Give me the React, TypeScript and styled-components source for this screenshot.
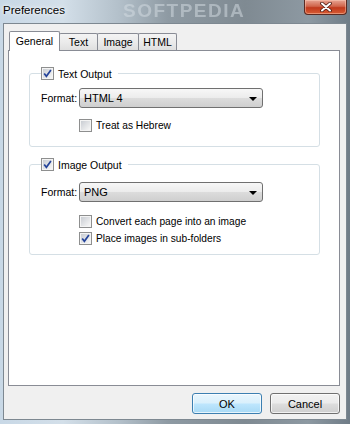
import styled, { createGlobalStyle } from "styled-components"

const GlobalStyle = createGlobalStyle`
  html, body {
    margin: 0;
    padding: 0;
    background: #ffffff;
  }
  body {
    font-family: "Liberation Sans", Arial, sans-serif;
  }
`

const CheckBox = ({ checked }: { checked?: boolean }) => (
  <svg width="13" height="13" viewBox="0 0 13 13">
    <defs>
      <linearGradient id="cbInner" x1="0" y1="0" x2="1" y2="1">
        <stop offset="0" stopColor="#c9cdd3" />
        <stop offset="1" stopColor="#f7f7f7" />
      </linearGradient>
    </defs>
    <rect x="0.5" y="0.5" width="12" height="12" fill="#f4f4f4" stroke="#8e8f8f" />
    <rect x="2" y="2" width="9" height="9" fill="url(#cbInner)" />
    {checked ? (
      <path d="M3.2 6.4 L5.4 9.3 L9.9 3" fill="none" stroke="#24439a" strokeWidth="1.7" />
    ) : null}
  </svg>
)

const CloseGlyph = () => (
  <svg width="12" height="10" viewBox="0 0 12 10">
    <path d="M2 1.5 L10 8.5 M10 1.5 L2 8.5" stroke="#4a1a12" strokeWidth="3.6" strokeLinecap="round" />
    <path d="M2 1.5 L10 8.5 M10 1.5 L2 8.5" stroke="#ffffff" strokeWidth="2" strokeLinecap="round" />
  </svg>
)

const CheckOption = ({ label, checked }: { label: string; checked?: boolean }) => (
  <CheckRow>
    <CheckBox checked={checked} />
    <span>{label}</span>
  </CheckRow>
)

const FormatRow = ({ value }: { value: string }) => (
  <Row>
    <FieldLabel>Format:</FieldLabel>
    <Combo>
      <span>{value}</span>
      <ComboArrow />
    </Combo>
  </Row>
)

export default function App() {
  return (
    <>
      <GlobalStyle />
      <Window>
        <TitleBar>
          <Title>Preferences</Title>
          <Watermark>SOFTPEDIA</Watermark>
          <CloseButton aria-label="Close">
            <CloseGlyph />
          </CloseButton>
        </TitleBar>
        <Client>
          <TabRow>
            <Tab $active $width={51}>General</Tab>
            <Tab $width={39}>Text</Tab>
            <Tab $width={42}>Image</Tab>
            <Tab $width={39}>HTML</Tab>
          </TabRow>
          <Panel>
            <Group $padTop={8} $padBottom={14}>
              <Legend>
                <CheckBox checked />
                <span>Text Output</span>
              </Legend>
              <FormatRow value="HTML 4" />
              <Options $top={11}>
                <CheckOption label="Treat as Hebrew" />
              </Options>
            </Group>
            <Group $padTop={11} $padBottom={9} $spaced>
              <Legend>
                <CheckBox checked />
                <span>Image Output</span>
              </Legend>
              <FormatRow value="PNG" />
              <Options $top={13}>
                <CheckOption label="Convert each page into an image" />
                <CheckOption label="Place images in sub-folders" checked />
              </Options>
            </Group>
          </Panel>
          <ButtonRow>
            <DialogButton $default>OK</DialogButton>
            <DialogButton>Cancel</DialogButton>
          </ButtonRow>
        </Client>
      </Window>
    </>
  )
}

const Window = styled.div`
  width: 350px;
  height: 424px;
  box-sizing: border-box;
  padding: 0 3px 4px 3px;
  display: flex;
  flex-direction: column;
  background: linear-gradient(
    90deg,
    #c8d8e6 0%,
    #d3dfe9 18%,
    #b3c0ca 34%,
    #8e9aa3 48%,
    #7f8a92 70%,
    #8d99a2 88%,
    #6f7c87 100%
  );
  overflow: hidden;
`

const TitleBar = styled.div`
  height: 23px;
  flex: none;
  display: flex;
  align-items: flex-start;
  justify-content: space-between;
  position: relative;
`

const Title = styled.span`
  margin-top: 4px;
  font-size: 11.5px;
  color: #000000;
  text-shadow: 0 0 6px rgba(255, 255, 255, 0.9), 0 0 3px rgba(255, 255, 255, 0.9);
  position: relative;
  z-index: 1;
`

const Watermark = styled.span`
  position: absolute;
  left: 120px;
  top: 1px;
  font-size: 19px;
  line-height: 19px;
  font-weight: bold;
  letter-spacing: 1.5px;
  color: rgba(214, 222, 228, 0.5);
  filter: blur(0.7px);
  pointer-events: none;
`

const CloseButton = styled.div`
  width: 43px;
  height: 15px;
  box-sizing: border-box;
  border: 1px solid #5a2a22;
  border-top: none;
  border-radius: 0 0 4px 4px;
  background: linear-gradient(180deg, #e7a493 0%, #d0654b 45%, #c0391c 55%, #d75c34 100%);
  box-shadow: inset 0 0 0 1px rgba(255, 210, 190, 0.45);
  display: flex;
  align-items: center;
  justify-content: center;
  position: relative;
  z-index: 1;
`

const Client = styled.div`
  flex: 1;
  display: flex;
  flex-direction: column;
  background: #f0f0f0;
  border: 1px solid #7d8891;
  padding: 7px 6px 5px 4px;
  font-size: 10.2px;
  color: #000000;
`

const TabRow = styled.div`
  height: 19px;
  display: flex;
  align-items: flex-end;
  padding-left: 1px;
`

const Tab = styled.div<{ $active?: boolean; $width: number }>`
  width: ${(p) => p.$width}px;
  height: ${(p) => (p.$active ? 20 : 17)}px;
  box-sizing: border-box;
  margin-left: -1px;
  margin-bottom: ${(p) => (p.$active ? -1 : 0)}px;
  border: 1px solid #898c95;
  border-bottom: none;
  border-radius: 2px 2px 0 0;
  background: ${(p) =>
    p.$active ? "#ffffff" : "linear-gradient(180deg, #f4f4f4 0%, #ebebeb 50%, #dfdfdf 100%)"};
  display: flex;
  align-items: center;
  justify-content: center;
  padding-bottom: ${(p) => (p.$active ? 2 : 0)}px;
  font-size: 10.5px;
  position: relative;
  z-index: ${(p) => (p.$active ? 2 : 1)};
  &:first-child {
    margin-left: 0;
  }
`

const Panel = styled.div`
  height: 336px;
  box-sizing: border-box;
  border: 1px solid #898c95;
  background: #ffffff;
  padding: 16px 19px 0 20px;
  display: flex;
  flex-direction: column;
`

const Group = styled.fieldset<{ $padTop: number; $padBottom: number; $spaced?: boolean }>`
  margin: ${(p) => (p.$spaced ? 11 : 0)}px 0 0 0;
  padding: ${(p) => p.$padTop}px 0 ${(p) => p.$padBottom}px 11px;
  border: 1px solid #d5dfe5;
  border-radius: 3px;
  min-width: 0;
`

const Legend = styled.legend`
  margin-left: 0;
  padding: 0 6px 0 0;
  display: flex;
  align-items: center;
  gap: 4px;
  height: 13px;
  font-size: 10.5px;
`

const Row = styled.div`
  display: flex;
  align-items: center;
`

const FieldLabel = styled.span`
  width: 38px;
  flex: none;
  font-size: 10.5px;
`

const Combo = styled.div`
  width: 184px;
  height: 20px;
  box-sizing: border-box;
  border: 1px solid #707070;
  border-radius: 3px;
  background: linear-gradient(180deg, #f7f7f7 0%, #ececec 48%, #dcdcdc 52%, #cfcfcf 100%);
  display: flex;
  align-items: center;
  justify-content: space-between;
  padding: 0 5px 0 4px;
  font-size: 11px;
`

const ComboArrow = styled.span`
  width: 0;
  height: 0;
  border-left: 4px solid transparent;
  border-right: 4px solid transparent;
  border-top: 4px solid #000000;
  margin-top: 1px;
`

const Options = styled.div<{ $top: number }>`
  display: flex;
  flex-direction: column;
  gap: 4px;
  margin: ${(p) => p.$top}px 0 0 38px;
`

const CheckRow = styled.div`
  height: 13px;
  display: flex;
  align-items: center;
  gap: 4px;
`

const ButtonRow = styled.div`
  display: flex;
  justify-content: flex-end;
  gap: 8px;
  margin-top: 7px;
`

const DialogButton = styled.div<{ $default?: boolean }>`
  width: 70px;
  height: 21px;
  box-sizing: border-box;
  border: 1px solid ${(p) => (p.$default ? "#3c7fb1" : "#707070")};
  border-radius: 3px;
  background: ${(p) =>
    p.$default
      ? "linear-gradient(180deg, #eaf6fd 0%, #d9f0fc 48%, #bee6fd 52%, #a7d9f5 100%)"
      : "linear-gradient(180deg, #f2f2f2 0%, #ebebeb 48%, #dddddd 52%, #cfcfcf 100%)"};
  box-shadow: inset 0 0 0 1px rgba(255, 255, 255, 0.7);
  display: flex;
  align-items: center;
  justify-content: center;
  font-size: 11px;
`
